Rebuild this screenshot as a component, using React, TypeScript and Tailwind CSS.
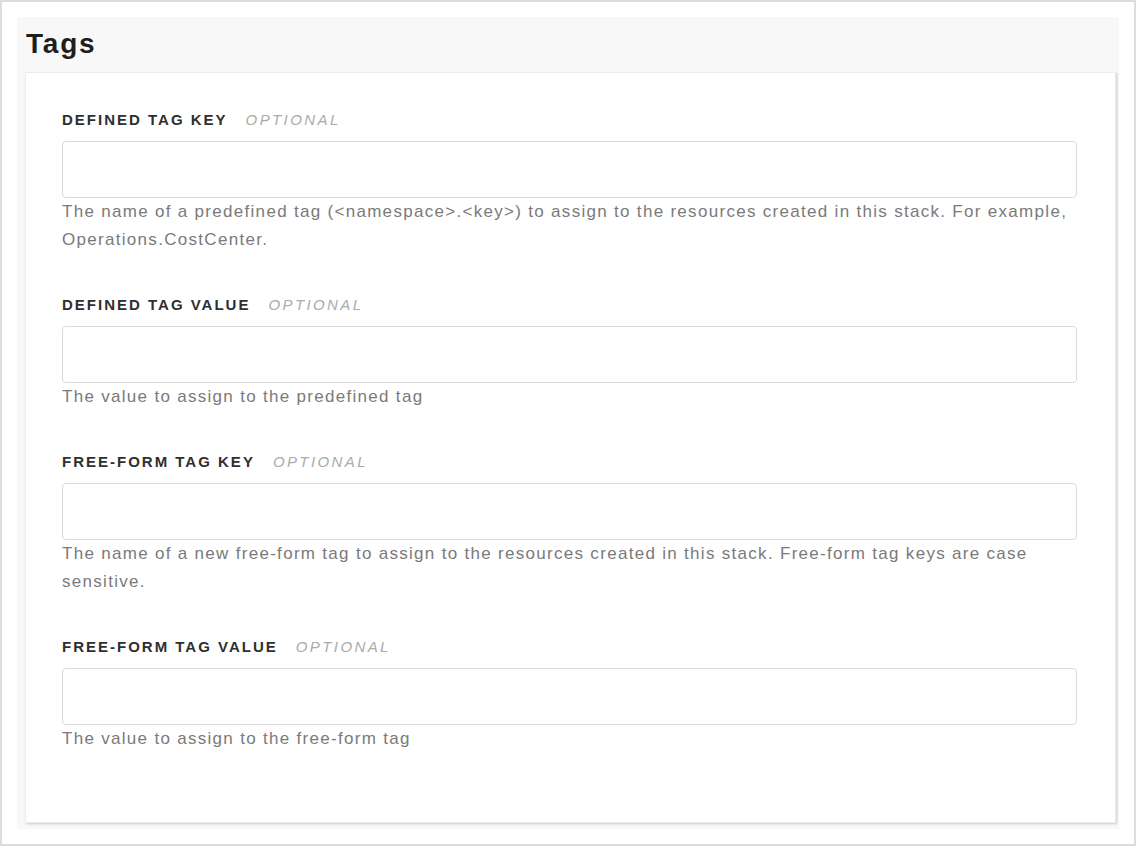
const FIELDS = [
  {
    label: "DEFINED TAG KEY",
    help: "The name of a predefined tag (<namespace>.<key>) to assign to the resources created in this stack. For example, Operations.CostCenter.",
  },
  {
    label: "DEFINED TAG VALUE",
    help: "The value to assign to the predefined tag",
  },
  {
    label: "FREE-FORM TAG KEY",
    help: "The name of a new free-form tag to assign to the resources created in this stack. Free-form tag keys are case sensitive.",
  },
  {
    label: "FREE-FORM TAG VALUE",
    help: "The value to assign to the free-form tag",
  },
];

function TagField({ label, help }: { label: string; help: string }) {
  return (
    <div className="mb-[41px] last:mb-0">
      <div className="flex items-baseline gap-[18px] h-[20px] leading-[20px] mb-[11px]">
        <span className="text-[15px] font-bold tracking-[2px] text-[#2f2f2f]">{label}</span>
        <span className="text-[15px] italic tracking-[2.4px] text-[#ababab]">OPTIONAL</span>
      </div>
      <input
        type="text"
        className="block w-full h-[57px] rounded-[4px] border border-[#dadada] bg-white px-3 outline-none"
      />
      <p className="text-[17px] leading-[28px] text-[#7a7a7a] tracking-[1.3px]">{help}</p>
    </div>
  );
}

export default function App() {
  return (
    <div
      className="w-[1136px] h-[846px] border-2 border-[#dcdcdc] bg-white p-[15px]"
      style={{ fontFamily: '"Liberation Sans", Arial, sans-serif' }}
    >
      <section className="h-full bg-[#f8f8f8] pl-[8px] pr-[3px] pb-[6px] flex flex-col">
        <h2 className="h-[55px] pl-[1px] pt-[10px] text-[28px] leading-[34px] font-bold tracking-[1.8px] text-[#1e1e1e]">
          Tags
        </h2>
        <div className="flex-1 bg-white border border-[#ececee] shadow-[1px_1px_2px_rgba(0,0,0,0.18)] pl-[36px] pr-[38px] pt-[37px]">
          {FIELDS.map((f) => (
            <TagField key={f.label} label={f.label} help={f.help} />
          ))}
        </div>
      </section>
    </div>
  );
}
